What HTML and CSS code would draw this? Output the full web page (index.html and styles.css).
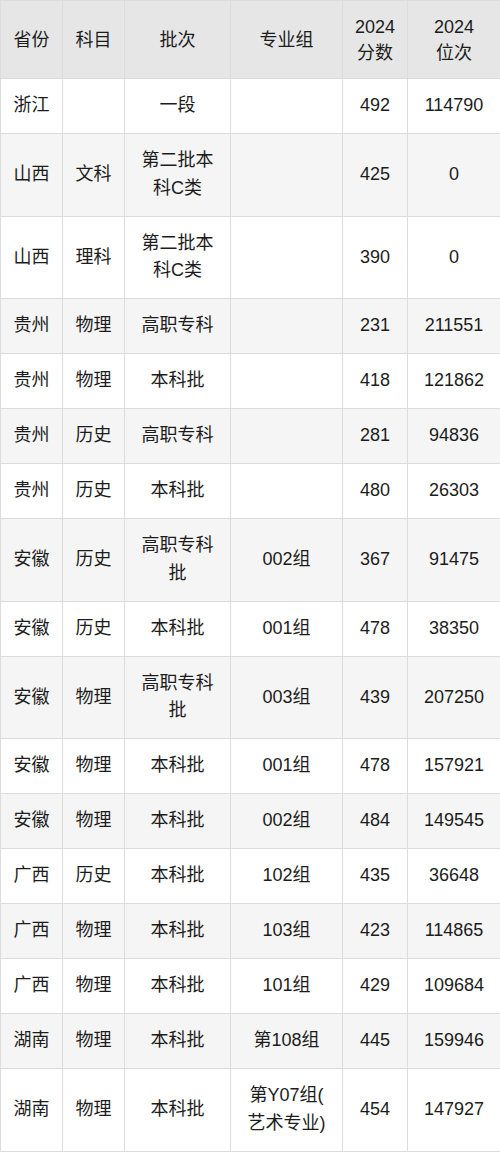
FILE: index.html
```html
<!DOCTYPE html>
<html lang="zh">
<head>
<meta charset="utf-8">
<link rel="stylesheet" href="styles.css">
</head>
<body>
<table class="score-table">
  <colgroup>
    <col class="c1"><col class="c2"><col class="c3"><col class="c4"><col class="c5"><col class="c6">
  </colgroup>
  <thead>
    <tr><th>省份</th><th>科目</th><th>批次</th><th>专业组</th><th>2024<br>分数</th><th>2024<br>位次</th></tr>
  </thead>
  <tbody>
    <tr><td>浙江</td><td></td><td>一段</td><td></td><td>492</td><td>114790</td></tr>
    <tr><td>山西</td><td>文科</td><td>第二批本<br>科C类</td><td></td><td>425</td><td>0</td></tr>
    <tr><td>山西</td><td>理科</td><td>第二批本<br>科C类</td><td></td><td>390</td><td>0</td></tr>
    <tr><td>贵州</td><td>物理</td><td>高职专科</td><td></td><td>231</td><td>211551</td></tr>
    <tr><td>贵州</td><td>物理</td><td>本科批</td><td></td><td>418</td><td>121862</td></tr>
    <tr><td>贵州</td><td>历史</td><td>高职专科</td><td></td><td>281</td><td>94836</td></tr>
    <tr><td>贵州</td><td>历史</td><td>本科批</td><td></td><td>480</td><td>26303</td></tr>
    <tr><td>安徽</td><td>历史</td><td>高职专科<br>批</td><td>002组</td><td>367</td><td>91475</td></tr>
    <tr><td>安徽</td><td>历史</td><td>本科批</td><td>001组</td><td>478</td><td>38350</td></tr>
    <tr><td>安徽</td><td>物理</td><td>高职专科<br>批</td><td>003组</td><td>439</td><td>207250</td></tr>
    <tr><td>安徽</td><td>物理</td><td>本科批</td><td>001组</td><td>478</td><td>157921</td></tr>
    <tr><td>安徽</td><td>物理</td><td>本科批</td><td>002组</td><td>484</td><td>149545</td></tr>
    <tr><td>广西</td><td>历史</td><td>本科批</td><td>102组</td><td>435</td><td>36648</td></tr>
    <tr><td>广西</td><td>物理</td><td>本科批</td><td>103组</td><td>423</td><td>114865</td></tr>
    <tr><td>广西</td><td>物理</td><td>本科批</td><td>101组</td><td>429</td><td>109684</td></tr>
    <tr><td>湖南</td><td>物理</td><td>本科批</td><td>第108组</td><td>445</td><td>159946</td></tr>
    <tr><td>湖南</td><td>物理</td><td>本科批</td><td>第Y07组(<br>艺术专业)</td><td>454</td><td>147927</td></tr>
  </tbody>
</table>
</body>
</html>
```

FILE: styles.css
```css
html, body {
  margin: 0;
  padding: 0;
  background: #ffffff;
}

.score-table {
  width: 500px;
  border-collapse: collapse;
  table-layout: fixed;
  font-family: "Liberation Sans", "Noto Sans CJK SC", sans-serif;
  font-size: 18px;
  line-height: 27.5px;
  color: #1c1c1c;
}

.c1 { width: 62px; }
.c2 { width: 62px; }
.c3 { width: 106px; }
.c4 { width: 112px; }
.c5 { width: 65px; }
.c6 { width: 93px; }

.score-table th,
.score-table td {
  border: 1px solid #dcdcdc;
  text-align: center;
  vertical-align: middle;
  padding: 13.25px 2px;
  font-weight: normal;
  white-space: nowrap;
}

.score-table th {
  background: #e6e6e6;
  height: 53px;
  padding: 12px 2px;
  line-height: 26px;
}

.score-table tbody tr:nth-child(even) td {
  background: #f5f5f5;
}

.score-table tbody tr:nth-child(odd) td {
  background: #ffffff;
}
```
